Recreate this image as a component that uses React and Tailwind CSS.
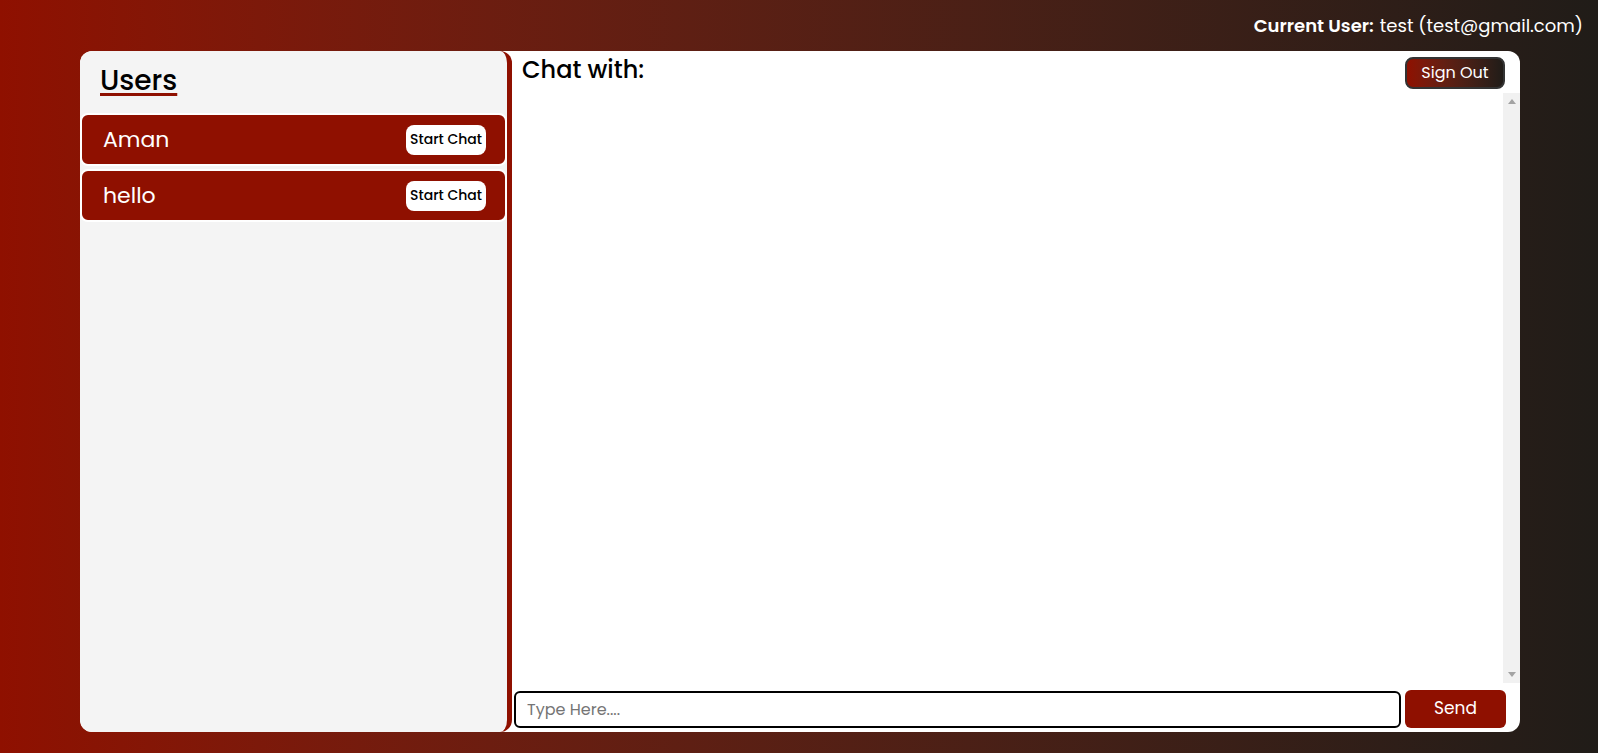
import React, { useState } from 'react';

const users = [
  { id: 1, name: 'Aman' },
  { id: 2, name: 'hello' },
];

const App = () => {
  const [message, setMessage] = useState('');
  const [chatWith, setChatWith] = useState('');

  return (
    <div className="h-[753px] w-full bg-linear-to-r from-[#8f1000] to-[#201c18] font-['Poppins','Open_Sans',sans-serif] overflow-hidden">
      <div className="h-[51px] flex items-center justify-end pr-[15px] text-white text-[18px]">
        <span className="font-semibold mr-[6px]">Current User:</span>
        <span>test (test@gmail.com)</span>
      </div>

      <div className="ml-[80px] w-[1440px] h-[681px] bg-white rounded-xl flex overflow-hidden">
        {/* users list */}
        <div className="w-[432px] h-full bg-[#f4f4f4] border-r-[5px] border-[#8f1000] rounded-xl flex flex-col">
          <h2 className="pl-5 pt-[12px] pb-[14px] text-[28px] leading-[36px] font-medium text-black underline decoration-[#8f1000] decoration-[3px] underline-offset-[3px]">
            Users
          </h2>
          <div className="flex flex-col gap-[3px]">
            {users.map((u) => (
              <div
                key={u.id}
                className="h-[53px] bg-[#8f1000] border-2 border-white rounded-lg flex items-center justify-between pl-[21px] pr-[19px]"
              >
                <span className="text-white text-[22px]">{u.name}</span>
                <button
                  onClick={() => setChatWith(u.name)}
                  className="h-[30px] w-[80px] bg-white rounded-lg text-black text-[14px] font-medium"
                >
                  Start Chat
                </button>
              </div>
            ))}
          </div>
        </div>

        {/* chat area */}
        <div className="flex-1 flex flex-col">
          <div className="h-[42px] flex items-start justify-between pl-[10px] pr-[15px] pt-[6px]">
            <h3 className="text-[24px] leading-[26px] font-medium text-black">Chat with: {chatWith}</h3>
            <button className="h-[32px] w-[100px] rounded-lg border-2 border-[#333] bg-linear-to-r from-[#8f1000] to-[#201c18] text-white text-[16px]">
              Sign Out
            </button>
          </div>
          <div className="flex-1 flex min-h-0">
            <div className="flex-1 overflow-y-auto"></div>
            <div className="w-[17px] bg-[#f1f1f1] flex flex-col items-center justify-between py-[6px]">
              <div className="w-0 h-0 border-l-[4px] border-r-[4px] border-b-[5px] border-l-transparent border-r-transparent border-b-[#a3a3a3]" />
              <div className="w-0 h-0 border-l-[4px] border-r-[4px] border-t-[5px] border-l-transparent border-r-transparent border-t-[#a3a3a3]" />
            </div>
          </div>
          <div className="flex items-center gap-[4px] pl-[2px] pr-[14px] pt-[7px] pb-[4px]">
            <input
              value={message}
              onChange={(e) => setMessage(e.target.value)}
              placeholder="Type Here...."
              className="flex-1 h-[37px] border-2 border-black rounded-md px-[11px] text-[16px] outline-none placeholder:text-[#757575]"
            />
            <button className="w-[101px] h-[38px] bg-[#8f1000] rounded-md text-white text-[17px]">
              Send
            </button>
          </div>
        </div>
      </div>
    </div>
  );
};

export default App;
